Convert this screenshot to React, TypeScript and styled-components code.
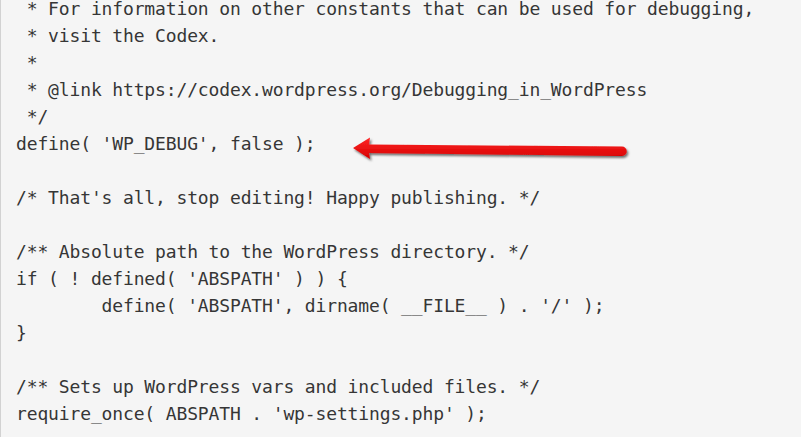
import { ReactElement } from 'react';
import styled, { createGlobalStyle } from 'styled-components';

const code = [
  ' * For information on other constants that can be used for debugging,',
  ' * visit the Codex.',
  ' *',
  ' * @link https://codex.wordpress.org/Debugging_in_WordPress',
  ' */',
  "define( 'WP_DEBUG', false );",
  '',
  "/* That's all, stop editing! Happy publishing. */",
  '',
  '/** Absolute path to the WordPress directory. */',
  "if ( ! defined( 'ABSPATH' ) ) {",
  "\tdefine( 'ABSPATH', dirname( __FILE__ ) . '/' );",
  '}',
  '',
  '/** Sets up WordPress vars and included files. */',
  "require_once( ABSPATH . 'wp-settings.php' );",
];

const GlobalStyle = createGlobalStyle`
  html, body {
    margin: 0;
    padding: 0;
    background: #f5f5f5;
  }
`;

const Arrow = () : ReactElement => (
  <ArrowSvg width="290" height="32" viewBox="0 0 290 32">
    <defs>
      <linearGradient id="arrowFill" x1="0" y1="0" x2="0" y2="1">
        <stop offset="0" stopColor="#ff2626" />
        <stop offset="1" stopColor="#d60000" />
      </linearGradient>
      <filter id="arrowShadow" x="-5%" y="-40%" width="110%" height="180%">
        <feDropShadow dx="1.5" dy="2" stdDeviation="1.3" floodColor="#000" floodOpacity="0.55" />
      </filter>
    </defs>
    {/* head on the left, shaft sloping slightly down to the rounded tail */}
    <path
      d="M4,14 L21,3.5 L20,10.5 L273,12.5 A4.75,4.75 0 0 1 273,22 L20,19 L21,25 Z"
      fill="url(#arrowFill)"
      filter="url(#arrowShadow)"
    />
  </ArrowSvg>
);

const App = () : ReactElement => (
  <>
    <GlobalStyle />
    <Page>
      <CodeBlock>
        {code.map((line, i) => (
          <Line key={i}>{line || ' '}</Line>
        ))}
      </CodeBlock>
      <Arrow />
    </Page>
  </>
);

export const Page = styled.div`
  position: relative;
  width: 801px;
  height: 437px;
  overflow: hidden;
  background: #f5f5f5;
  border-left: 1px solid #d2d2d2;
  box-sizing: border-box;
`;

export const CodeBlock = styled.pre`
  margin: -5px 0 0;
  padding: 0 0 0 15px;
  font-family: "DejaVu Sans Mono", "Liberation Mono", monospace;
  font-size: 18px;
  letter-spacing: -0.14px;
  line-height: 27px;
  color: #363636;
  tab-size: 8;
`;

export const Line = styled.div`
  white-space: pre;
  height: 27px;
`;

export const ArrowSvg = styled.svg`
  position: absolute;
  left: 348px;
  top: 134px;
`;

export default App;
